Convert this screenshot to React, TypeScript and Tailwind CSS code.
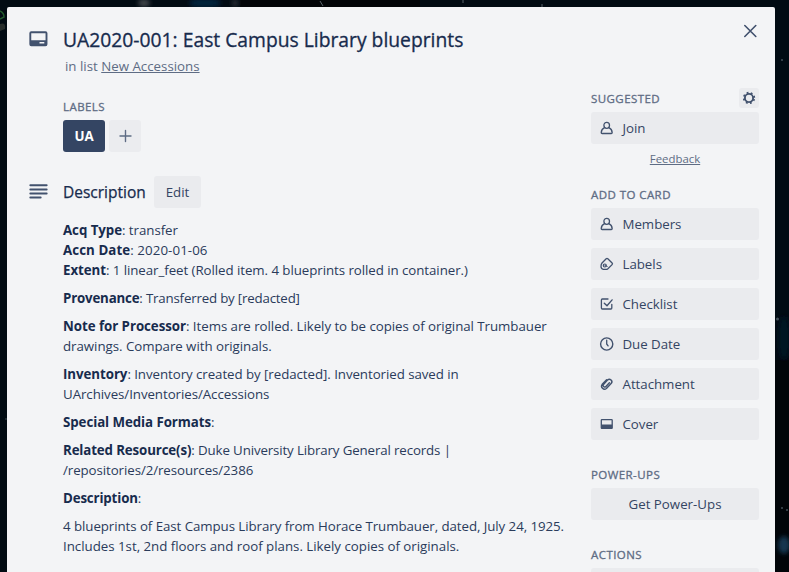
import type { ReactNode } from "react";

const stroke = { fill: "none", stroke: "currentColor", strokeLinecap: "round", strokeLinejoin: "round" } as const;

function CardIcon() {
  return (
    <svg width="20" height="16" viewBox="0 0 20 16" className="text-[#42526e]">
      <rect x="2.300" y="1.300" width="16.200" height="13" rx="1" {...stroke} strokeWidth="1.900" />
      <path d="M2.300 9.300h16.200v5h-16.200z" fill="currentColor" />
      <path d="M11.500 11.800h4.800" stroke="#f3f4f6" strokeWidth="1.500" />
    </svg>
  );
}

function LinesIcon() {
  return (
    <svg width="20" height="16" viewBox="0 0 20 16" className="text-[#42526e]">
      <path d="M2.300 1.300h16.400M2.300 5.500h16.400M2.300 9.500h16.400M2.300 13.500h10.400" {...stroke} strokeWidth="1.900" />
    </svg>
  );
}

function PersonIcon() {
  return (
    <svg width="16" height="16" viewBox="0 0 16 16" className="text-[#42526e]">
      <ellipse cx="7.700" cy="5.300" rx="2.800" ry="3" {...stroke} strokeWidth="1.300" />
      <path d="M5.500 7.700C3.300 8.700 2.400 10.400 2.200 12.600q0 .9.900.9h9.200q.9 0 .9-.9C13 10.400 12.100 8.700 9.900 7.700" {...stroke} strokeWidth="1.300" />
    </svg>
  );
}

function LabelIcon() {
  return (
    <svg width="16" height="16" viewBox="0 0 16 16" className="text-[#42526e]">
      <path d="M3 7 7.200 2.700q.8-.7 1.600 0l4.300 4.300q.8.800 0 1.600L8.900 12.700Q8.100 13.400 7 13.400H4.300Q2 13 2 10.600 2 8.200 3 7z" {...stroke} strokeWidth="1.300" />
      <circle cx="5.800" cy="9.500" r="1.500" {...stroke} strokeWidth="1.200" />
      <path d="M5.900 9.500 8.200 10.400" {...stroke} strokeWidth="1" />
    </svg>
  );
}

function CheckIcon() {
  return (
    <svg width="16" height="16" viewBox="0 0 16 16" className="text-[#42526e]">
      <path d="M9 3H3.300Q2.400 3 2.400 3.900v8.200q0 .9.900.9h8.600q.9 0 .9-.9V8.300" {...stroke} strokeWidth="1.300" />
      <path d="M5.300 7.300 8 9.800 13.100 3.900" {...stroke} strokeWidth="1.400" />
    </svg>
  );
}

function ClockIcon() {
  return (
    <svg width="16" height="16" viewBox="0 0 16 16" className="text-[#42526e]">
      <circle cx="7.700" cy="8" r="6.100" {...stroke} strokeWidth="1.400" />
      <path d="M7.700 4.200V8l1.400 1.900" {...stroke} strokeWidth="1.300" />
    </svg>
  );
}

function ClipIcon() {
  return (
    <svg width="16" height="16" viewBox="0 0 16 16" className="text-[#42526e]">
      <path d="M7.600 3.700 3.200 8.300a3 3 0 0 0 4.200 4.200l4.700-4.900a2.500 2.500 0 0 0-3.600-3.500L4.500 8.400a1.600 1.600 0 0 0 2.200 2.300l3.700-3.900" {...stroke} strokeWidth="1.400" />
    </svg>
  );
}

function CoverIcon() {
  return (
    <svg width="16" height="16" viewBox="0 0 16 16" className="text-[#42526e]">
      <rect x="2.300" y="3.700" width="10.900" height="8.600" rx=".6" {...stroke} strokeWidth="1.300" />
      <path d="M2.300 8.500h10.900v4H2.300z" fill="currentColor" />
    </svg>
  );
}

function GearIcon() {
  return (
    <svg width="14" height="14" viewBox="0 0 14 14">
      <circle cx="7" cy="7" r="4.100" {...stroke} strokeWidth="1.900" />
      <circle cx="7" cy="7" r="5.300" fill="none" stroke="currentColor" strokeWidth="1.800" strokeDasharray="1.800 2.362" strokeDashoffset="-1.180" />
    </svg>
  );
}

function SideButton({ icon, children }: { icon: ReactNode; children: ReactNode }) {
  return (
    <button className="flex h-8 w-full items-center gap-[7.5px] rounded-[3px] bg-[#eaebee] pl-2 text-[#344563]">
      {icon}
      <span className="tracking-[-0.03px]">{children}</span>
    </button>
  );
}

function SideTitle({ children }: { children: ReactNode }) {
  return (
    <h3 className="h-5 text-[11.5px] leading-5 tracking-[0.43px] text-[#5e6c84] [-webkit-text-stroke:0.3px_#5e6c84]">
      <span className="block pt-[0.5px]">{children}</span>
    </h3>
  );
}

function Line({ children, className = "" }: { children: ReactNode; className?: string }) {
  return <span className={`block whitespace-nowrap ${className}`}>{children}</span>;
}

function B({ children }: { children: ReactNode }) {
  return <b className="text-[#172b4d]">{children}</b>;
}

function Backdrop() {
  return (
    <svg width="789" height="572" viewBox="0 0 789 572" className="absolute inset-0">
      <defs>
        <filter id="soft" x="-100%" y="-100%" width="300%" height="300%">
          <feGaussianBlur stdDeviation="2" />
        </filter>
      </defs>
      <rect x="240" width="180" height="7" fill="#020407" />
      <rect x="775" y="360" width="14" height="212" fill="#010509" />
      <g filter="url(#soft)">
        <ellipse cx="205" cy="3" rx="16" ry="5" fill="#06203a" />
        <ellipse cx="144" cy="3" rx="6" ry="4" fill="#3c4347" />
        <ellipse cx="235" cy="3" rx="3" ry="4" fill="#252c32" />
        <ellipse cx="784" cy="338" rx="6" ry="22" fill="#031523" />
        <ellipse cx="784" cy="545" rx="6" ry="9" fill="#123650" />
      </g>
      <path d="M0 11q4 2 4 6l-4 2" fill="none" stroke="#235c2d" strokeWidth="1.500" />
      <path d="M0 24q6-2 5 5l-5 2z" fill="#272d2b" />
      <path d="m320 1 3 5M463 0v3M542 4v3" stroke="#59636a" strokeWidth="1" />
      <g fill="#43505a">
        <circle cx="777.500" cy="319" r="1.500" />
        <circle cx="782" cy="60" r="1" />
        <circle cx="782" cy="508" r="1" />
        <circle cx="787" cy="510" r="1" />
        <circle cx="6" cy="419" r=".8" />
      </g>
    </svg>
  );
}

export default function App() {
  return (
    <div className="relative h-[572px] w-[789px] overflow-hidden bg-[#010b13] pt-[7px] pl-[7px] font-['Open_Sans','Noto_Sans',sans-serif] text-[13.3px] leading-5 text-[#172b4d]">
      <Backdrop />
      <div className="relative flex h-[565px] w-[768px] overflow-hidden rounded-t-[2px] bg-[#f3f4f6]">
        <main className="w-[584px] pt-5 pl-[21px]">
          <header className="flex">
            <div className="w-[35px] pt-1"><CardIcon /></div>
            <div>
              <h1 className="mt-[1px] h-6 text-[19.3px] leading-6 whitespace-nowrap [-webkit-text-stroke:0.3px_#172b4d]">UA2020-001: East Campus Library blueprints</h1>
              <p className="mt-1 pl-0.5 text-[#5e6c84]">in list <a className="underline">New Accessions</a></p>
            </div>
          </header>
          <section className="mt-5 pl-[35px]">
            <SideTitle>LABELS</SideTitle>
            <div className="mt-1 flex gap-1">
              <span className="flex h-8 w-[42px] items-center justify-center rounded-[3px] bg-[#344563] font-bold text-white">UA</span>
              <button className="flex size-8 items-center justify-center rounded-[3px] bg-[#ebecef] text-[#5e6c84]">
                <svg width="14" height="14" viewBox="0 0 14 14"><path d="M7.500 1.500v11M2 7h11" {...stroke} strokeWidth="1.400" /></svg>
              </button>
            </div>
          </section>
          <section className="mt-6">
            <div className="flex h-8 items-center">
              <div className="w-[35px]"><LinesIcon /></div>
              <h2 className="w-[91px] text-[15.5px] [-webkit-text-stroke:0.25px_#172b4d]">Description</h2>
              <button className="h-8 w-[47px] rounded-[3px] bg-[#eaebee] text-[#344563]">Edit</button>
            </div>
            <div className="mt-3 flex flex-col gap-2 pl-[35px] text-[#2a3b5b]">
              <p>
                <Line className="tracking-[-0.05px]"><B>Acq Type</B>: transfer</Line>
                <Line className="tracking-[0.08px]"><B>Accn Date</B>: 2020-01-06</Line>
                <Line className="tracking-[-0.06px]"><B>Extent</B>: 1 linear_feet (Rolled item. 4 blueprints rolled in container.)</Line>
              </p>
              <p><Line className="tracking-[-0.19px]"><B>Provenance</B>: Transferred by [redacted]</Line></p>
              <p>
                <Line className="tracking-[-0.045px]"><B>Note for Processor</B>: Items are rolled. Likely to be copies of original Trumbauer</Line>
                <Line className="tracking-[-0.04px]">drawings. Compare with originals.</Line>
              </p>
              <p>
                <Line className="tracking-[-0.06px]"><B>Inventory</B>: Inventory created by [redacted]. Inventoried saved in</Line>
                <Line className="tracking-[-0.06px]">UArchives/Inventories/Accessions</Line>
              </p>
              <p><Line className="tracking-[-0.07px]"><B>Special Media Formats</B>:</Line></p>
              <p>
                <Line className="tracking-[-0.13px]"><B>Related Resource(s)</B>: Duke University Library General records |</Line>
                <Line className="tracking-[-0.08px]">/repositories/2/resources/2386</Line>
              </p>
              <p><Line className="tracking-[-0.15px]"><B>Description</B>:</Line></p>
              <p>
                <Line className="tracking-[-0.065px]">4 blueprints of East Campus Library from Horace Trumbauer, dated, July 24, 1925.</Line>
                <Line className="tracking-[-0.015px]">Includes 1st, 2nd floors and roof plans. Likely copies of originals.</Line>
              </p>
            </div>
          </section>
        </main>
        <aside className="w-[168px]">
          <div className="flex h-[81px] justify-end pt-4">
            <svg width="17" height="16" viewBox="0 0 17 16" className="text-[#42526e]"><path d="m2.800 2.500 11 11m0-11-11 11" {...stroke} strokeWidth="1.600" /></svg>
          </div>
          <div className="flex h-6 justify-between">
            <SideTitle>SUGGESTED</SideTitle>
            <button className="mr-[0.5px] flex size-5 items-center justify-center rounded-[3px] bg-[#eaebee] text-[#42526e]"><GearIcon /></button>
          </div>
          <SideButton icon={<PersonIcon />}>Join</SideButton>
          <p className="mt-[5px] h-5 text-center text-[11.4px] text-[#5e6c84] underline">Feedback</p>
          <div className="mt-[15px]"><SideTitle>ADD TO CARD</SideTitle></div>
          <div className="mt-1 flex flex-col gap-2">
            <SideButton icon={<PersonIcon />}>Members</SideButton>
            <SideButton icon={<LabelIcon />}>Labels</SideButton>
            <SideButton icon={<CheckIcon />}>Checklist</SideButton>
            <SideButton icon={<ClockIcon />}>Due Date</SideButton>
            <SideButton icon={<ClipIcon />}>Attachment</SideButton>
            <SideButton icon={<CoverIcon />}>Cover</SideButton>
          </div>
          <div className="mt-6"><SideTitle>POWER-UPS</SideTitle></div>
          <button className="mt-1 h-8 w-full rounded-[3px] bg-[#eaebee] text-[#344563]">Get Power-Ups</button>
          <div className="mt-6"><SideTitle>ACTIONS</SideTitle></div>
          <div className="mt-1 h-8 rounded-[3px] bg-[#eaebee]" />
        </aside>
      </div>
    </div>
  );
}
